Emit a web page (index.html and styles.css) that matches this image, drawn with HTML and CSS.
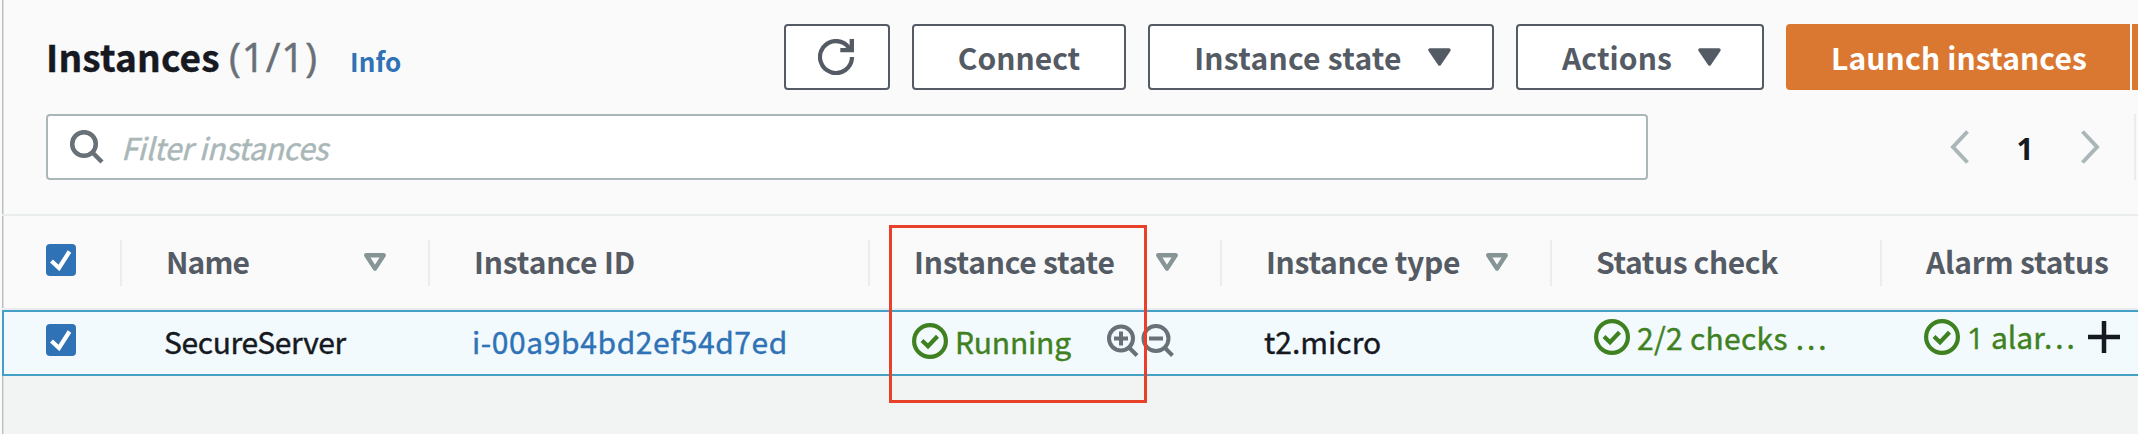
FILE: index.html
```
<!DOCTYPE html>
<html lang="en">
<head>
<meta charset="utf-8">
<title>Instances</title>
<link rel="stylesheet" href="styles.css">
</head>
<body>
<svg class="defs" aria-hidden="true">
  <symbol id="caret" viewBox="0 0 23 18"><path d="M2 2h19l-9.5 14z" fill="currentColor" stroke="currentColor" stroke-width="3.4" stroke-linejoin="round"/></symbol>
  <symbol id="sort" viewBox="0 0 22 18"><path d="M2.3 2.2h17.4L11 15.6z" fill="none" stroke="currentColor" stroke-width="4.4" stroke-linejoin="round"/></symbol>
  <symbol id="ok" viewBox="0 0 36 36"><circle cx="18" cy="18" r="15.9" fill="none" stroke="currentColor" stroke-width="4.2"/><path d="M10 17.500l6 5.700 9.500-10" fill="none" stroke="currentColor" stroke-width="4.200"/></symbol>
  <symbol id="check" viewBox="0 0 30 32"><rect width="30" height="32" rx="4" fill="#2f72b6"/><path d="M5.500 17l7.500 7L23.500 7.500" fill="none" stroke="#fff" stroke-width="4.200"/></symbol>
</svg>
<main class="panel">
  <section class="head">
    <div class="titlebar">
      <h1 class="title">Instances</h1>
      <span class="count">(1/1)</span>
      <a class="info">Info</a>
      <div class="actions">
        <button class="btn btn-refresh"><svg width="36" height="36" viewBox="0 0 36 36"><path d="M34 18A16 16 0 1 1 31 8.700" fill="none" stroke="currentColor" stroke-width="4.200"/><path d="M36 0v13.200H22.300V9h5.500l3.800-2V0z" fill="currentColor"/></svg></button>
        <button class="btn btn-connect">Connect</button>
        <button class="btn btn-state">Instance state<svg class="caret"><use href="#caret"/></svg></button>
        <button class="btn btn-actions">Actions<svg class="caret"><use href="#caret"/></svg></button>
        <div class="launch"><button class="primary">Launch instances</button><span class="more"></span></div>
      </div>
    </div>
    <div class="filterbar">
      <div class="search">
        <svg width="34" height="34" viewBox="0 0 34 34" fill="none" stroke="currentColor" stroke-width="4.500"><circle cx="14" cy="14" r="11.800"/><path d="M22 22l10 10"/></svg>
        <span class="placeholder">Filter instances</span>
      </div>
      <div class="pager">
        <svg width="19" height="34" viewBox="0 0 19 34"><path d="M17.500 1.500L3 17l14.500 15.500" fill="none" stroke="currentColor" stroke-width="4"/></svg>
        <span class="page">1</span>
        <svg width="19" height="34" viewBox="0 0 19 34"><path d="M1.500 1.500L16 17 1.500 32.500" fill="none" stroke="currentColor" stroke-width="4"/></svg>
        <span class="rule"></span>
      </div>
    </div>
  </section>
  <section class="table">
    <div class="row columns">
      <div class="cell pick"><svg class="box"><use href="#check"/></svg></div>
      <div class="cell"><span class="c-name">Name</span><svg class="sort"><use href="#sort"/></svg></div>
      <div class="cell"><span class="c-id">Instance ID</span></div>
      <div class="cell"><span class="c-state">Instance state</span><svg class="sort"><use href="#sort"/></svg></div>
      <div class="cell"><span class="c-type">Instance type</span><svg class="sort"><use href="#sort"/></svg></div>
      <div class="cell"><span class="c-status">Status check</span></div>
      <div class="cell"><span class="c-alarm">Alarm status</span></div>
    </div>
    <div class="row record">
      <div class="cell pick"><svg class="box"><use href="#check"/></svg></div>
      <div class="cell"><span class="v-name">SecureServer</span></div>
      <div class="cell"><a class="v-id">i-00a9b4bd2ef54d7ed</a></div>
      <div class="cell good">
        <svg class="ok"><use href="#ok"/></svg><span class="v-state">Running</span>
        <span class="lenses">
          <svg width="32" height="34" viewBox="0 0 32 34" fill="none" stroke="currentColor" stroke-width="4"><circle cx="14" cy="14.500" r="12"/><path d="M22 23.500l8 8M7 14.500h14M14 7.500v14"/></svg>
          <svg width="34" height="34" viewBox="0 0 34 34" fill="none" stroke="currentColor" stroke-width="4"><circle cx="15" cy="14.500" r="12.500"/><path d="M23.500 23.500l8 8M8 14.500h14"/></svg>
        </span>
      </div>
      <div class="cell"><span class="v-type">t2.micro</span></div>
      <div class="cell good raised"><svg class="ok"><use href="#ok"/></svg><span class="v-status">2/2 checks …</span></div>
      <div class="cell good raised"><svg class="ok"><use href="#ok"/></svg><span class="v-alarm"><span class="one">1</span> alar…</span><svg class="plus" width="32" height="32" viewBox="0 0 32 32"><path d="M0 16h32M16 0v32" stroke="currentColor" stroke-width="4.500"/></svg></div>
    </div>
  </section>
  <div class="highlight"></div>
</main>
</body>
</html>
```
FILE: styles.css
```
* { box-sizing: border-box; }
body {
  margin: 0;
  height: 434px;
  overflow: hidden;
  background: #f2f3f3;
  color: #16191f;
  font: 30px/40px "Noto Sans CJK SC", "Open Sans", sans-serif;
}
svg { display: block; flex: none; }
.defs { position: absolute; width: 0; height: 0; }
.panel {
  position: relative;
  height: 434px;
  overflow: hidden;
  border-left: 2px solid #fafafa;
  box-shadow: inset 1px 0 #b8bfc2, inset 2px 0 #dcdfe0;
  white-space: nowrap;
}
.head {
  display: flex;
  flex-direction: column;
  gap: 24px;
  height: 216px;
  padding: 24px 0 0 44px;
  background: #fafafa;
  border-bottom: 2px solid #eaeded;
  box-shadow: inset 1px 0 #b8bfc2, inset 2px 0 #dcdfe0;
}
.titlebar { display: flex; align-items: center; height: 66px; }
.title { margin: 0; padding-bottom: 2px; width: 183px; font-size: 37px; font-weight: 700; letter-spacing: 0.2px; -webkit-text-stroke: 0.4px; }
.count { width: 121px; color: #687078; font: 40px/40px "Open Sans", sans-serif; letter-spacing: 1px; -webkit-text-stroke: 0.5px; }
.info { padding-top: 7px; color: #2f72b6; font-size: 26px; font-weight: 700; letter-spacing: 0.1px; }
.actions { display: flex; gap: 22px; height: 66px; margin-left: auto; }
.btn {
  display: flex;
  align-items: center;
  justify-content: center;
  padding: 0;
  height: 66px;
  border: 2px solid #545b64;
  border-radius: 4px;
  background: #fff;
  color: #545b64;
  font: inherit;
  font-weight: 700;
}
.btn-refresh { width: 106px; padding-right: 2px; }
.btn-connect { width: 214px; }
.btn-state { width: 346px; padding-left: 3px; letter-spacing: 0.25px; }
.btn-actions { width: 248px; padding-left: 3px; letter-spacing: 0.1px; }
.caret { width: 23px; height: 18px; margin: 0 0 0 26px; }
.launch { display: flex; gap: 2px; background: #fff; border-radius: 4px 0 0 4px; }
.primary {
  width: 344px;
  padding: 0 0 0 2px;
  border: 0;
  border-radius: 4px 0 0 4px;
  background: #da7832;
  color: #fff;
  font: inherit;
  font-weight: 700;
  letter-spacing: 0.13px;
}
.more { width: 6px; background: #da7832; }
.filterbar { display: flex; justify-content: space-between; height: 66px; }
.search {
  display: flex;
  align-items: center;
  gap: 17px;
  width: 1602px;
  padding-left: 22px;
  border: 2px solid #aab7b8;
  border-radius: 4px;
  background: #fff;
  color: #687078;
}
.placeholder { color: #aab7b8; font-style: italic; letter-spacing: -0.2px; -webkit-text-stroke: 0.5px; }
.pager { display: flex; align-items: center; width: 188px; color: #aab7b8; }
.page { width: 112px; padding-top: 3px; color: #16191f; font: 700 30px/40px "Open Sans", sans-serif; text-align: center; }
.rule { width: 2px; height: 66px; margin-left: 34px; background: #eaeded; }
.row { display: grid; grid-template-columns: 120px 308px 440px 352px 330px 330px 1fr; }
.cell { display: flex; align-items: center; min-width: 0; }
.columns {
  height: 94px;
  padding-top: 24px;
  align-items: start;
  background: #fafafa;
  border-bottom: 2px solid #eaeded;
  box-shadow: inset 1px 0 #b8bfc2, inset 2px 0 #dcdfe0;
  color: #545b64;
  font-weight: 700;
}
.columns .cell { height: 46px; padding: 0 42px 4px 44px; border-right: 2px solid #eaeded; }
.columns .cell:last-child { border-right: 0; }
.columns .cell.pick { align-items: flex-start; padding-top: 4px; }
.row .pick { padding-left: 44px; }
.box { width: 30px; height: 32px; }
.sort { width: 22px; height: 18px; margin: 1px 0 0 auto; color: #879596; }
.c-name { letter-spacing: -0.9px; }
.c-id { letter-spacing: -0.15px; }
.c-state { letter-spacing: -0.25px; }
.c-type { letter-spacing: -0.3px; }
.c-status { letter-spacing: -0.4px; }
.c-alarm { letter-spacing: -0.2px; }
.record {
  grid-template-columns: 118px 308px 440px 352px 330px 330px 1fr;
  height: 66px;
  border: 2px solid #44a0c6;
  border-right: 0;
  background: #f2fafd;
  -webkit-text-stroke: 0.4px;
}
.record svg { -webkit-text-stroke: 0; }
.record .cell { padding: 0 0 4px 42px; }
.record .pick { padding: 0 0 6px 42px; }
.record .good { gap: 7px; color: #3f8120; }
.record .raised { padding-bottom: 12px; }
.ok { width: 36px; height: 36px; }
.lenses { display: flex; gap: 2px; margin-left: 29px; color: #687078; }
.v-name { letter-spacing: -0.35px; }
.v-id { color: #2f72b6; letter-spacing: 0.6px; }
.v-state { letter-spacing: -0.2px; }
.v-status { letter-spacing: 0.3px; }
.one { font-family: "Open Sans", sans-serif; }
.plus { margin-left: 6px; color: #16191f; }
.highlight { position: absolute; left: 887px; top: 225px; width: 258px; height: 178px; border: 3px solid #e8412a; }
```
